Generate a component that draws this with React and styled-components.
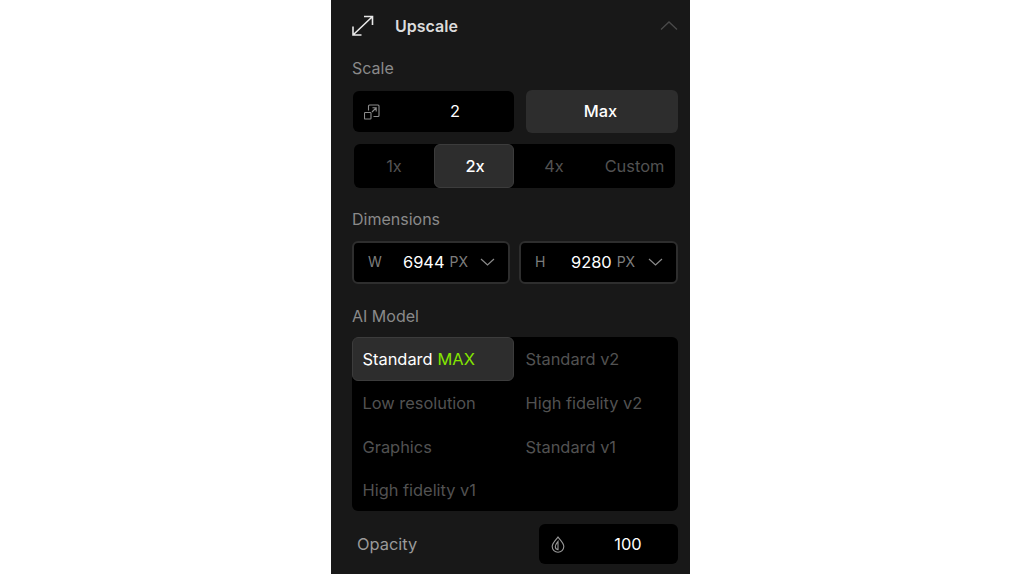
import React from "react";
import styled, { createGlobalStyle } from "styled-components";

const GlobalStyle = createGlobalStyle`
  html, body {
    margin: 0;
    padding: 0;
    background: #fff;
    font-family: Inter, "Liberation Sans", sans-serif;
  }
`;

const Page = styled.div`
  width: 1020px;
  height: 574px;
  overflow: hidden;
  display: flex;
  justify-content: flex-start;
  padding-left: 331px;
  box-sizing: border-box;
`;

const Panel = styled.div`
  width: 359px;
  height: 574px;
  box-sizing: border-box;
  background: #181818;
  padding: 14px 12px 0 21px;
  display: flex;
  flex-direction: column;
`;

const Header = styled.div`
  display: flex;
  align-items: center;
  height: 23px;
  color: #e4e4e4;
`;

const Title = styled.h2`
  margin: 0 0 0 20px;
  flex: 1;
  font-size: 16px;
  font-weight: 600;
  color: #dcdcdc;
`;

const Label = styled.div`
  font-size: 16px;
  line-height: 20px;
  color: #8a8a8a;
  margin-top: ${(p) => p.$top}px;
`;

const ScaleRow = styled.div`
  display: flex;
  align-items: center;
  justify-content: space-between;
  margin-top: 12px;
`;

const InputBox = styled.div`
  display: flex;
  align-items: center;
  box-sizing: border-box;
  width: ${(p) => p.$width}px;
  height: ${(p) => p.$height}px;
  background: #000;
  border-radius: 6px;
  margin-left: ${(p) => p.$left || 0}px;
  padding-left: ${(p) => p.$inset}px;
  color: #fff;
  font-size: 16.4px;
`;

const BoxValue = styled.span`
  flex: 1;
  text-align: center;
  padding: 0 0 ${(p) => p.$lift || 0}px ${(p) => p.$pad}px;
`;

const MaxButton = styled.button`
  width: 152px;
  height: 43px;
  border: none;
  border-radius: 6px;
  background: #2d2d2d;
  color: #fff;
  font: inherit;
  font-size: 16.4px;
  font-weight: 450;
  padding: 0 3px 2px 0;
`;

const Segments = styled.div`
  display: grid;
  grid-template-columns: 80px 80px 80px 81px;
  width: 321px;
  height: 44px;
  margin: 11px 0 0 2px;
  background: #000;
  border-radius: 6px;
`;

const Segment = styled.div`
  display: flex;
  align-items: center;
  justify-content: center;
  box-sizing: border-box;
  font-size: 16.4px;
  border-radius: 6px;
  color: ${(p) => (p.$active ? "#fff" : "#525252")};
  background: ${(p) => (p.$active ? "#2d2d2d" : "transparent")};
  border: ${(p) => (p.$active ? "1px solid #3c3c3c" : "none")};
  padding-left: ${(p) => (p.$active ? 2 : 0)}px;
  font-weight: ${(p) => (p.$active ? 450 : 400)};
`;

const DimRow = styled.div`
  display: flex;
  justify-content: space-between;
  margin-top: 12px;
`;

const DimSelect = styled.div`
  display: flex;
  align-items: center;
  box-sizing: border-box;
  width: ${(p) => p.$width}px;
  height: 43px;
  background: #000;
  border: 2px solid #2e2e2e;
  border-radius: 6px;
  padding: 0 13px 2px 14px;
`;

const DimLetter = styled.span`
  width: ${(p) => p.$width}px;
  font-size: 14px;
  color: #7d7d7d;
`;

const DimValue = styled.span`
  font-size: 16.4px;
  color: #fff;
`;

const DimUnit = styled.span`
  margin-left: 5px;
  flex: 1;
  font-size: 14px;
  color: #7d7d7d;
`;

const ModelGrid = styled.div`
  display: grid;
  grid-template-columns: 162px 1fr;
  grid-template-rows: 44px 44px 44px 42px;
  width: 326px;
  height: 174px;
  margin-top: 11px;
  background: #000;
  border-radius: 6px;
`;

const ModelItem = styled.div`
  display: flex;
  align-items: center;
  box-sizing: border-box;
  padding-left: ${(p) => (p.$active ? 9.5 : 10.5)}px;
  font-size: 16.4px;
  border-radius: 6px;
  color: ${(p) => (p.$active ? "#fff" : "#525252")};
  background: ${(p) => (p.$active ? "#2d2d2d" : "transparent")};
  border: ${(p) => (p.$active ? "1px solid #3c3c3c" : "none")};

  &:nth-child(even) {
    padding-left: 11.5px;
  }
`;

const Green = styled.span`
  color: #84e600;
  margin-left: 5px;
`;

const OpacityRow = styled.div`
  display: flex;
  align-items: center;
  justify-content: space-between;
  margin-top: 13px;
  padding-left: 5px;
`;

const OpacityLabel = styled.span`
  font-size: 16.4px;
  color: #9a9a9a;
`;

const ExpandIcon = () => (
  <svg width="23" height="23" viewBox="0 0 23 23" fill="none" stroke="#e8e8e8" strokeWidth="1.6">
    <path d="M1 21 20.5 2.5M12 2.5h8.5V11M1 12.5V21h8.5" />
  </svg>
);

const ChevronUp = () => (
  <svg width="18" height="9" viewBox="0 0 18 9" fill="none" stroke="#4a4a4a" strokeWidth="1.3">
    <path d="M1 8.5 9 1l8 7.5" />
  </svg>
);

const ChevronDown = () => (
  <svg width="15" height="8" viewBox="0 0 15 8" fill="none" stroke="#8a8a8a" strokeWidth="1.2">
    <path d="M1 1l6.5 6L14 1" />
  </svg>
);

const ScaleIcon = () => (
  <svg width="16" height="16" viewBox="0 0 16 16" fill="none" stroke="#8c8c8c" strokeWidth="1.1">
    <rect x="0.5" y="8.5" width="6.5" height="6.5" rx="0.8" />
    <path d="M4.5 6.5V2a1 1 0 0 1 1-1H14a1 1 0 0 1 1 1v9.5a1 1 0 0 1-1 1H9.5" />
    <path d="M8 8l4-4M8.5 3.8H12.2V7.5" />
  </svg>
);

const DropIcon = () => (
  <svg width="14" height="17" viewBox="0 0 14 17" fill="none" stroke="#9a9a9a" strokeWidth="1.1">
    <path d="M7 1C5 4 1.2 7 1.2 10.6a5.8 5.6 0 0 0 11.6 0C12.8 7 9 4 7 1Z" />
    <path d="M7 5.5c-1 1.4-2.7 3-2.7 5.1 0 1.7 1.2 3 2.7 3Z" />
  </svg>
);

const segments = ["1x", "2x", "4x", "Custom"];

const models = [
  "Standard v2",
  "Low resolution",
  "High fidelity v2",
  "Graphics",
  "Standard v1",
  "High fidelity v1",
];

export default function App() {
  return (
    <>
      <GlobalStyle />
      <Page>
        <Panel>
          <Header>
            <ExpandIcon />
            <Title>Upscale</Title>
            <ChevronUp />
          </Header>
          <Label $top={21}>Scale</Label>
          <ScaleRow>
            <InputBox $width={161} $height={41} $left={1} $inset={11}>
              <ScaleIcon />
              <BoxValue $pad={16} $lift={2}>2</BoxValue>
            </InputBox>
            <MaxButton>Max</MaxButton>
          </ScaleRow>
          <Segments>
            {segments.map((s) => (
              <Segment key={s} $active={s === "2x"}>
                {s}
              </Segment>
            ))}
          </Segments>
          <Label $top={21}>Dimensions</Label>
          <DimRow>
            <DimSelect $width={158}>
              <DimLetter $width={35}>W</DimLetter>
              <DimValue>6944</DimValue>
              <DimUnit>PX</DimUnit>
              <ChevronDown />
            </DimSelect>
            <DimSelect $width={159}>
              <DimLetter $width={36}>H</DimLetter>
              <DimValue>9280</DimValue>
              <DimUnit>PX</DimUnit>
              <ChevronDown />
            </DimSelect>
          </DimRow>
          <Label $top={22}>AI Model</Label>
          <ModelGrid>
            <ModelItem $active>
              Standard<Green>MAX</Green>
            </ModelItem>
            {models.map((m) => (
              <ModelItem key={m}>{m}</ModelItem>
            ))}
          </ModelGrid>
          <OpacityRow>
            <OpacityLabel>Opacity</OpacityLabel>
            <InputBox $width={139} $height={40} $inset={12}>
              <DropIcon />
              <BoxValue $pad={13}>100</BoxValue>
            </InputBox>
          </OpacityRow>
        </Panel>
      </Page>
    </>
  );
}
